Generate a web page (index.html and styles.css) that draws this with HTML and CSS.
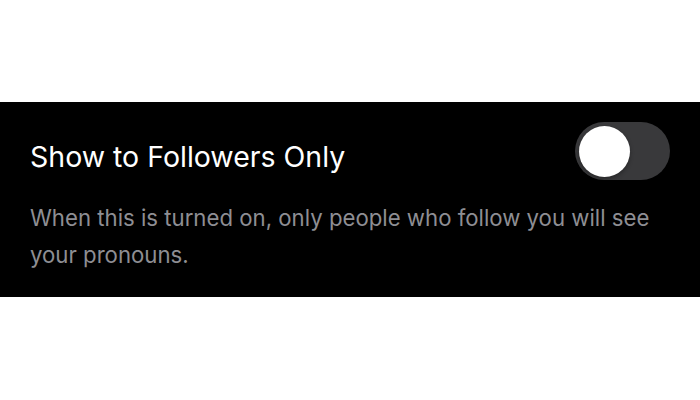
FILE: index.html
```html
<!DOCTYPE html>
<html lang="en">
<head>
    <meta charset="UTF-8">
    <meta name="viewport" content="width=device-width, initial-scale=1.0">
    <title>Pronoun Visibility</title>
    <link rel="stylesheet" href="styles.css">
</head>
<body>

    <div class="settings-group">
        <div class="setting-row">
            <span class="setting-label">Show to Followers Only</span>
            <div class="switch" role="switch" aria-checked="false">
                <div class="knob"></div>
            </div>
        </div>
        <p class="setting-note">When this is turned on, only people who follow you will see your pronouns.</p>
    </div>

</body>
</html>
```

FILE: styles.css
```css
/* General Reset */
* {
    margin: 0;
    padding: 0;
    box-sizing: border-box;
}

body {
    font-family: Inter, "Liberation Sans", sans-serif;
    background-color: #fff;
    width: 700px;
    height: 400px;
    padding-top: 102px;
}

.settings-group {
    background-color: #000;
    height: 195px;
    padding: 20px 30px 0 30px;
}

.setting-row {
    display: flex;
    justify-content: space-between;
    align-items: center;
}

.setting-label {
    color: #fff;
    font-size: 28.5px;
    margin-top: 10px;
}

.switch {
    width: 95px;
    height: 58px;
    border-radius: 29px;
    background-color: #39393b;
    padding: 4px;
}

.knob {
    width: 51px;
    height: 51px;
    border-radius: 50%;
    background-color: #fff;
    box-shadow: 0 2px 4px rgba(0, 0, 0, 0.3);
}

.setting-note {
    color: #8e8e93;
    font-size: 22.2px;
    line-height: 37px;
    margin-top: 19px;
}
```
